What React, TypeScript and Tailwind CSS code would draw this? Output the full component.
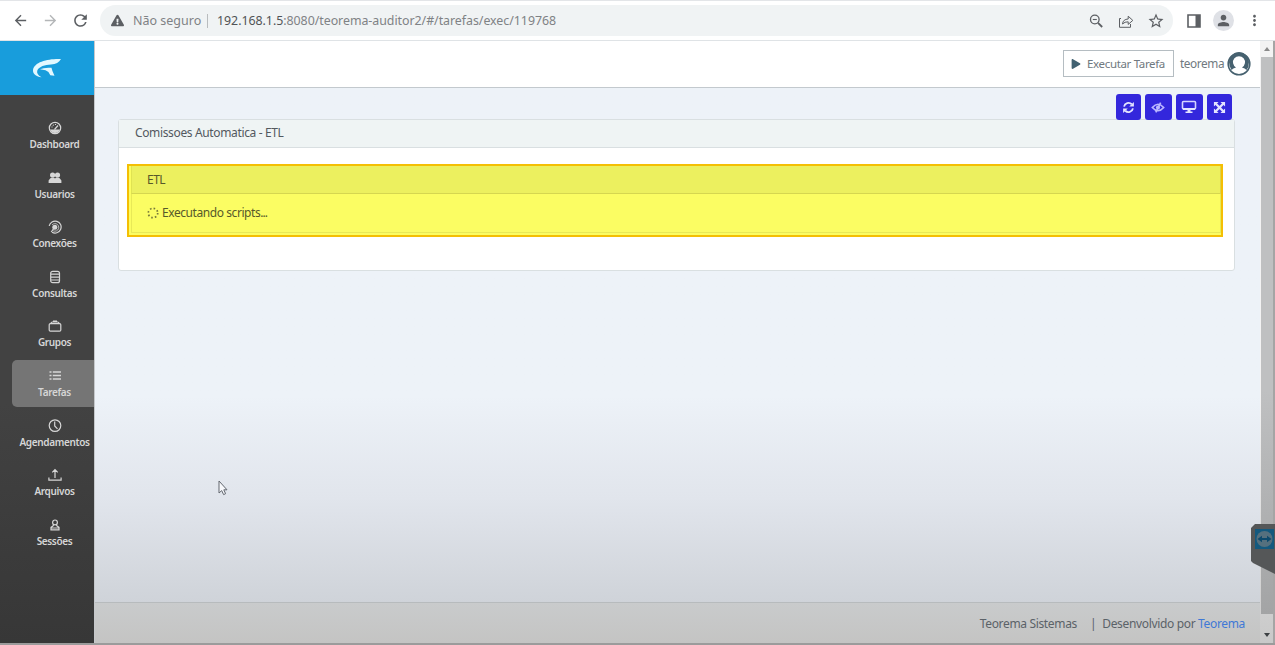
import type { ReactNode } from "react";
import { FaPlay, FaExclamationTriangle } from "react-icons/fa";
import { MdArrowBack, MdArrowForward, MdRefresh, MdPerson, MdMoreVert, MdStarBorder } from "react-icons/md";

const stroke = { fill: "none", stroke: "currentColor", strokeWidth: 1.2 };

const menu: { label: string; icon: ReactNode }[] = [
  {
    label: "Dashboard",
    icon: (
      <>
        <circle cx="7" cy="7" r="5.7" {...stroke} />
        <path d="M2 8.6h10a5.4 5.4 0 0 1-10 0z" fill="currentColor" />
        <path d="M6.5 8.5 10 4.5M3.5 6h1M5 3.8l.6.7M7.5 3v1" {...stroke} />
      </>
    ),
  },
  {
    label: "Usuarios",
    icon: (
      <>
        <circle cx="4.6" cy="4" r="2.6" fill="currentColor" />
        <circle cx="9.5" cy="4" r="2.6" fill="currentColor" />
        <path d="M.6 12V9.400Q2 6.600 4.600 6.600q1.700.1 2.400 1 .8-1 2.400-1 2.600.2 4 2.800V12z" fill="currentColor" />
      </>
    ),
  },
  {
    label: "Conexões",
    icon: (
      <>
        <path d="M1.2 6A6 6 0 1 1 4 12.2" {...stroke} />
        <path d="M4 5A3.8 3.8 0 1 1 4.2 10" {...stroke} strokeWidth={0.8} />
        <circle cx="6.8" cy="7.3" r="2.5" fill="currentColor" />
        <path d="M6.5 7.5 3.2 12" {...stroke} />
      </>
    ),
  },
  {
    label: "Consultas",
    icon: (
      <>
        <rect x="2.7" y="1.3" width="8.8" height="11.4" rx="2" {...stroke} />
        <path d="M3 4.2h8.2M3 7.2h8.2M3 10h8.2" {...stroke} />
      </>
    ),
  },
  {
    label: "Grupos",
    icon: (
      <>
        <rect x="1.2" y="4.6" width="11.6" height="7.6" rx="1.2" {...stroke} />
        <path d="M3 4.2Q3.2 3 4.4 3h5.2Q10.8 3 11 4.2M5 2.2h4" {...stroke} />
      </>
    ),
  },
  {
    label: "Tarefas",
    icon: <path d="M1.500 3h2M4.800 3H13M1.500 6.500h2M4.800 6.500H13M1.500 10h2M4.800 10H13" {...stroke} strokeWidth={1.6} />,
  },
  {
    label: "Agendamentos",
    icon: (
      <>
        <circle cx="7" cy="6.600" r="5.800" {...stroke} />
        <path d="M6.700 2.600v4.400L9.500 9.800" {...stroke} />
      </>
    ),
  },
  {
    label: "Arquivos",
    icon: <path d="M.9 9.400v2.800h3.400M13.100 9.400v2.800H9.700M4.300 12.200h5.400M7 10V2M4.300 4.300 7 1.600l2.700 2.700" {...stroke} />,
  },
  {
    label: "Sessões",
    icon: (
      <>
        <circle cx="7" cy="4.400" r="2.400" {...stroke} />
        <path d="M5.300 6.600v1.200L3 9.400v2.400h8V9.400L8.700 7.800V6.600M3 10h8" {...stroke} />
      </>
    ),
  },
];

function BrowserBar() {
  return (
    <div className="flex h-[41px] shrink-0 items-center border-y border-b-[#dfe3e6] border-t-[#e3e5e8] bg-white text-[#5c5f63]">
      <MdArrowBack className="ml-3 h-[17px] w-[17px]" />
      <MdArrowForward className="ml-[13px] h-[17px] w-[17px] text-[#b4b6b8]" />
      <MdRefresh className="ml-[12px] h-[19px] w-[19px]" />
      <div className="ml-[10px] flex h-[31px] w-[1073px] items-center rounded-full bg-[#f0f3f4]">
        <FaExclamationTriangle className="ml-[11px] h-[13px] w-[13px]" />
        <span className="ml-[9px] w-[69px] whitespace-nowrap pt-px text-[12.5px] text-[#7f8285]">Não seguro</span>
        <span className="ml-[5px] h-[14px] w-px bg-[#b9bcbe]" />
        <span className="ml-[9px] whitespace-nowrap pt-px text-[12.4px] tracking-[-0.04px] text-[#7f8285]">
          <span className="text-[#505356]">192.168.1.5</span>:8080/teorema-auditor2/#/tarefas/exec/119768
        </span>
        <svg viewBox="0 0 16 16" className="ml-auto h-4 w-4" fill="none" stroke="currentColor">
          <circle cx="6.800" cy="6.500" r="4.300" strokeWidth="1.300" />
          <path d="M10 9.800l4.200 4.200" strokeWidth="1.800" />
          <path d="M4.800 6.500h4" strokeWidth="1.100" />
        </svg>
        <svg viewBox="0 0 16 16" className="ml-[14px] h-4 w-4" fill="none" stroke="currentColor" strokeWidth="1">
          <path d="M3 5.500H1.500v8.800h11V11M4.500 11Q5 6.200 10.200 6V3.200l4.600 4.200-4.600 4V8.800Q6.800 8.600 4.500 11z" />
        </svg>
        <MdStarBorder className="ml-[13px] mr-[8px] h-[18px] w-[18px]" />
      </div>
      <svg viewBox="0 0 14 14" className="ml-[14px] h-[14px] w-[14px]">
        <path d="M1 1h12v12H1z" fill="none" stroke="currentColor" strokeWidth="1.600" />
        <path d="M8.500 1H13v12H8.500z" fill="currentColor" />
      </svg>
      <span className="ml-[12px] flex h-[21px] w-[21px] items-center justify-center rounded-full bg-[#dfe1e6]">
        <MdPerson className="h-[17px] w-[17px]" />
      </span>
      <MdMoreVert className="ml-[12px] h-[17px] w-[17px]" />
    </div>
  );
}

function Sidebar() {
  return (
    <aside className="flex w-[94px] shrink-0 flex-col bg-gradient-to-b from-[#424242] from-60% to-[#373737]">
      <div className="flex h-[54px] shrink-0 items-center justify-center bg-[#189ddc]">
        <svg viewBox="0 0 30 20" className="h-5 w-[30px]" fill="#e2f8ff">
          <path d="M29 1C17 .4 2 3.500 1 12.200c-.2 4 3.500 6.400 8.500 7C5.800 17.500 4.500 15 5.300 12.600 7 8.600 13 6.800 19 6.600 24 6.200 27 4.500 29 1z" />
          <path d="M8 11.200Q12 9.300 19.500 9.800q.5 3 3 8l-4.200-.5q-1.300-3.800-4.800-5-2.500-.8-5.500-1.100z" />
        </svg>
      </div>
      <nav className="mt-[17px] flex flex-col gap-[2.6px] pl-[12px]">
        {menu.map((item) => (
          <a
            key={item.label}
            className={`flex h-[47px] w-[82px] flex-col items-center rounded-l-[5px] pl-[3px] pt-[9px] text-[#d6d6d6] ${
              item.label === "Tarefas" ? "bg-[#757575]" : ""
            }`}
          >
            <svg viewBox="0 0 14 14" className="h-[14px] w-[14px]">{item.icon}</svg>
            <span className="mt-[2px] whitespace-nowrap text-[10px] font-semibold leading-[14px] tracking-[-0.35px]">
              {item.label}
            </span>
          </a>
        ))}
      </nav>
    </aside>
  );
}

function Header() {
  return (
    <header className="flex h-[47px] shrink-0 items-center justify-end border-b border-[#c3c9ce] bg-white pr-[9px] text-[#707980]">
      <button className="-mt-px flex h-[27px] w-[111px] items-center border border-[#b5bdc2] pl-[7px] text-[11.5px]">
        <FaPlay className="h-[10px] w-[10px] text-[#426272]" />
        <span className="ml-[6px] whitespace-nowrap tracking-[-0.34px]">Executar Tarefa</span>
      </button>
      <span className="ml-[6px] w-[44px] whitespace-nowrap text-[11.8px] tracking-[-0.4px]">teorema</span>
      <svg viewBox="0 0 24 24" className="-mt-px ml-[3px] h-6 w-6">
        <circle cx="12" cy="12" r="10.800" fill="#fff" stroke="#46616f" strokeWidth="1.600" />
        <path d="M2 10a10 10 0 0 1 20 0q0 5-2.500 8-1.500-2-4.500-2.600a6 6 0 1 0-6 0Q6 16 4.500 18 2 14 2 10z" fill="#46616f" />
      </svg>
    </header>
  );
}

function Toolbar() {
  const button = "flex h-[26px] items-center justify-center rounded-[3px] bg-[#3327dc] text-[#e4e4ff]";
  return (
    <div className="relative z-10 -mb-px flex justify-end gap-1 pr-[3.5px]">
      <button className={`${button} w-[25px]`}>
        <svg viewBox="0 0 14 14" className="h-[13px] w-[13px]" fill="none" stroke="currentColor" strokeWidth="2">
          <path d="M2.200 6A4.900 4.900 0 0 1 10.500 3.500M11.800 8A4.900 4.900 0 0 1 3.500 10.500" />
          <path d="M12.800 1v5H7.800zM1.200 13V8h5z" fill="currentColor" stroke="none" />
        </svg>
      </button>
      <button className={`${button} w-[27px]`}>
        <svg viewBox="0 0 16 12" className="h-[11px] w-[14px]" fill="none" stroke="#bcb8ff" strokeWidth="1.900">
          <path d="M1.500 6Q8-1.500 14.500 6 8 13.500 1.500 6z" />
          <circle cx="8" cy="6" r="2.300" fill="#bcb8ff" stroke="none" />
          <path d="M11 .5 5.500 11.500" />
        </svg>
      </button>
      <button className={`${button} w-[27px]`}>
        <svg viewBox="0 0 16 14" className="h-[14px] w-[16px]">
          <rect x="1.500" y="1.500" width="13" height="7.500" rx="1" fill="none" stroke="#d5d3ff" strokeWidth="1.600" />
          <path d="M2 8h12v2H2zM6.500 10h3v1.500h2V13h-7v-1.500h2z" fill="#e4e4ff" />
        </svg>
      </button>
      <button className={`${button} w-[25px]`}>
        <svg viewBox="0 0 14 14" className="h-[13px] w-[13px]">
          <path d="M3 3l8 8M11 3l-8 8" stroke="currentColor" strokeWidth="2.500" />
          <path d="M1 1h5L1 6zM13 1v5L8 1zM1 13V8l5 5zM13 13H8l5-5z" fill="currentColor" />
        </svg>
      </button>
    </div>
  );
}

function TaskCard() {
  return (
    <section className="flex h-[152px] flex-col rounded-[3px] border border-[#d9dfe1] bg-white text-[12px] text-[#53595f]">
      <div className="flex h-[28px] shrink-0 items-center border-b border-[#d9dfe1] bg-[#eff4f4] pb-px pl-[16px] tracking-[-0.36px]">
        Comissoes Automatica - ETL
      </div>
      <div className="ml-[8px] mr-[11px] mt-[16px] flex h-[73px] shrink-0 flex-col border-2 border-[#f4bf04] bg-[#fbfd63] pl-[2px] text-[#57592a]">
        <div className="flex h-[28px] shrink-0 items-center border-b border-l border-r border-b-[#d5d650] border-l-[#e0e352] border-r-[#e0d24a] bg-[#ecf05f] pl-[15px] tracking-[-0.5px]">
          ETL
        </div>
        <div className="flex h-[39px] items-center border border-t-0 border-[#e8e957] pl-[15px]">
          <svg viewBox="0 0 12 12" className="h-3 w-3" fill="none" stroke="#77793a" strokeWidth="1.700">
            <circle cx="6" cy="6" r="4.700" strokeDasharray="1.600 2.100" />
          </svg>
          <span className="ml-[3px] whitespace-nowrap tracking-[-0.43px]">
            Executando scripts<span className="tracking-[-1px]">...</span>
          </span>
        </div>
      </div>
    </section>
  );
}

function Scrollbar() {
  return (
    <div className="flex w-[15px] shrink-0 flex-col items-center border-r-2 border-[#a5a5a5] bg-gradient-to-b from-[#f3f3f3] from-60% to-[#c9c9c9]">
      <div className="flex h-4 w-full items-center justify-center">
        <span className="h-0 w-0 border-x-[3px] border-b-[4px] border-x-transparent border-b-[#8a8a8a]" />
      </div>
      <div className="h-[557px] w-[12px] bg-gradient-to-b from-[#bfc0c1] from-60% to-[#a3a4a5]" />
      <div className="flex flex-1 items-center justify-center pt-[12px]">
        <span className="h-0 w-0 border-x-[3px] border-t-[4px] border-x-transparent border-t-[#3d4144]" />
      </div>
    </div>
  );
}

export default function App() {
  return (
    <div className="relative flex h-[645px] w-[1275px] flex-col overflow-hidden border-b-2 border-[#9b9b9b] font-['Noto_Sans',sans-serif]">
      <BrowserBar />
      <div className="flex min-h-0 flex-1">
        <Sidebar />
        <div className="flex flex-1 flex-col border-l border-[#c5c8cb]">
          <Header />
          <main className="flex flex-1 flex-col bg-gradient-to-b from-[#edf2f8] from-60% via-[#e1e5ec] via-80% to-[#cfd3d9] pl-[23px] pr-[25px] pt-[6px]">
            <Toolbar />
            <TaskCard />
          </main>
          <footer className="flex h-[41px] shrink-0 items-center justify-end border-t border-[#b7bbbd] bg-gradient-to-b from-[#c9cbcc] to-[#c4c4c3] pr-[15px] pt-px text-[12px] tracking-[-0.34px] text-[#5b6268]">
            <span className="whitespace-nowrap">Teorema Sistemas</span>
            <span className="ml-[13px]">|</span>
            <span className="ml-[6px] whitespace-nowrap">
              Desenvolvido por <span className="text-[#3f78d6]">Teorema</span>
            </span>
          </footer>
        </div>
        <Scrollbar />
      </div>

      {/* remote session tab */}
      <svg viewBox="0 0 24 50" className="absolute right-0 top-[524px] h-[50px] w-6">
        <path d="M4 0h20v50L2 39 0 37V4z" fill="#555758" />
        <rect x="4" y="5" width="19" height="20" fill="#14597e" />
        <circle cx="13.500" cy="15" r="8" fill="#55707e" />
        <path d="M6.500 15 11 11.800v2.200h5v-2.200l4.500 3.200-4.500 3.200V16h-5v2.200z" fill="#0d4a6d" />
      </svg>

      {/* mouse pointer */}
      <svg viewBox="0 0 10 16" className="absolute left-[218px] top-[480px] h-4 w-[10px]">
        <path d="M1 1v12l2.700-2.400 1.900 4 2-.9-1.800-3.900H9z" fill="#f7f8fb" stroke="#62676f" strokeWidth="1" />
      </svg>
    </div>
  );
}
